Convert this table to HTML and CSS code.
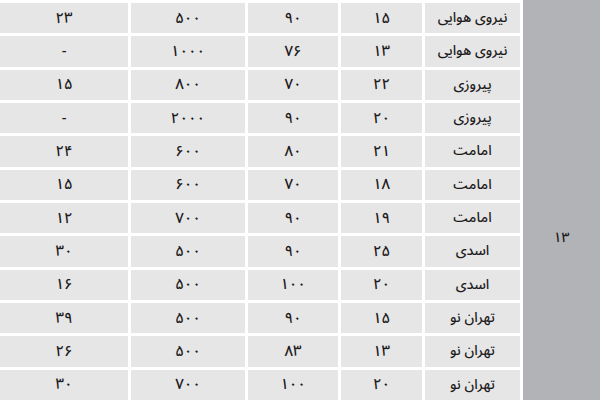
FILE: index.html
```html
<!DOCTYPE html>
<html lang="fa" dir="rtl">
<head>
<meta charset="utf-8">
<link rel="stylesheet" href="styles.css">
</head>
<body>
<div class="page">
  <div class="side"><span class="side-label">۱۳</span></div>
  <div class="table">
    <div class="cell">نیروی هوایی</div><div class="cell num">۱۵</div><div class="cell num">۹۰</div><div class="cell num">۵۰۰</div><div class="cell num">۲۳</div>
    <div class="cell">نیروی هوایی</div><div class="cell num">۱۳</div><div class="cell num">۷۶</div><div class="cell num">۱۰۰۰</div><div class="cell num">-</div>
    <div class="cell">پیروزی</div><div class="cell num">۲۲</div><div class="cell num">۷۰</div><div class="cell num">۸۰۰</div><div class="cell num">۱۵</div>
    <div class="cell">پیروزی</div><div class="cell num">۲۰</div><div class="cell num">۹۰</div><div class="cell num">۲۰۰۰</div><div class="cell num">-</div>
    <div class="cell">امامت</div><div class="cell num">۲۱</div><div class="cell num">۸۰</div><div class="cell num">۶۰۰</div><div class="cell num">۲۴</div>
    <div class="cell">امامت</div><div class="cell num">۱۸</div><div class="cell num">۷۰</div><div class="cell num">۶۰۰</div><div class="cell num">۱۵</div>
    <div class="cell">امامت</div><div class="cell num">۱۹</div><div class="cell num">۹۰</div><div class="cell num">۷۰۰</div><div class="cell num">۱۲</div>
    <div class="cell">اسدی</div><div class="cell num">۲۵</div><div class="cell num">۹۰</div><div class="cell num">۵۰۰</div><div class="cell num">۳۰</div>
    <div class="cell">اسدی</div><div class="cell num">۲۰</div><div class="cell num">۱۰۰</div><div class="cell num">۵۰۰</div><div class="cell num">۱۶</div>
    <div class="cell">تهران نو</div><div class="cell num">۱۵</div><div class="cell num">۹۰</div><div class="cell num">۵۰۰</div><div class="cell num">۳۹</div>
    <div class="cell">تهران نو</div><div class="cell num">۱۳</div><div class="cell num">۸۳</div><div class="cell num">۵۰۰</div><div class="cell num">۲۶</div>
    <div class="cell">تهران نو</div><div class="cell num">۲۰</div><div class="cell num">۱۰۰</div><div class="cell num">۷۰۰</div><div class="cell num">۳۰</div>
  </div>
</div>
</body>
</html>
```
FILE: styles.css
```css
html, body {
  margin: 0;
  padding: 0;
  background: #ffffff;
}
body {
  font-family: "Noto Sans Arabic", "Noto Sans", "DejaVu Sans", sans-serif;
  color: #1e1b1c;
}
.page {
  direction: rtl;
  display: flex;
  gap: 3px;
  width: 600px;
  height: 400px;
  overflow: hidden;
}
.side {
  flex: 0 0 77px;
  background: #b2b3b7;
  display: flex;
  justify-content: center;
  padding-top: 226px;
  box-sizing: border-box;
}
.side-label {
  font-size: 14px;
  font-weight: 500;
  line-height: 24px;
  height: 24px;
  letter-spacing: -0.5px;
}
.table {
  display: grid;
  grid-template-columns: 95px 81px 90px 114px 128px;
  grid-auto-rows: 30.33px;
  gap: 3px;
  padding-top: 3px;
}
.cell {
  background: #e6e6e7;
  display: flex;
  align-items: center;
  justify-content: center;
  font-size: 14px;
  font-weight: 500;
  line-height: 1;
}
.num {
  font-size: 15px;
  letter-spacing: -0.5px;
}
```
